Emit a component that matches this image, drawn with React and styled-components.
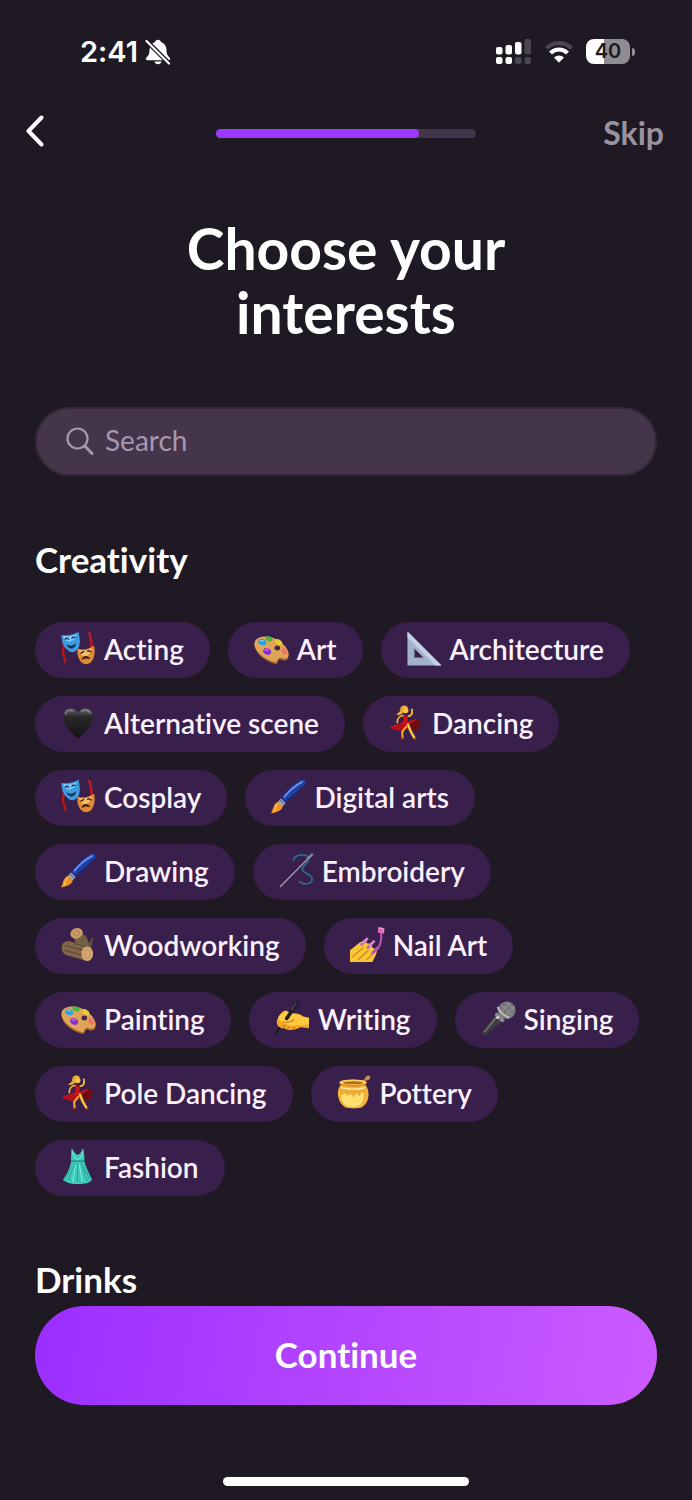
import React, { useState } from "react";
import styled, { createGlobalStyle } from "styled-components";

const creativity = [
  { name: "Acting", icon: Masks },
  { name: "Art", icon: Palette },
  { name: "Architecture", icon: SetSquare },
  { name: "Alternative scene", icon: BlackHeart },
  { name: "Dancing", icon: Dancer },
  { name: "Cosplay", icon: Masks },
  { name: "Digital arts", icon: Brush },
  { name: "Drawing", icon: Brush },
  { name: "Embroidery", icon: Needle },
  { name: "Woodworking", icon: Wood },
  { name: "Nail Art", icon: Nails },
  { name: "Painting", icon: Palette },
  { name: "Writing", icon: WritingHand },
  { name: "Singing", icon: Microphone },
  { name: "Pole Dancing", icon: Dancer },
  { name: "Pottery", icon: HoneyPot },
  { name: "Fashion", icon: Dress },
];

function App() {
  const [search, setSearch] = useState("");
  const [selected, setSelected] = useState([]);
  const progress = 78;

  const toggle = (name) => {
    setSelected(selected.includes(name) ? selected.filter((n) => n !== name) : [...selected, name]);
  };

  const visible = creativity.filter((item) => item.name.toLowerCase().includes(search.toLowerCase()));

  return (
    <Page>
      <GlobalStyle />
      <StatusBar>
        <StatusGroup>
          <Clock>2:41</Clock>
          <BellOff />
        </StatusGroup>
        <StatusIcons>
          <Signal />
          <Wifi />
          <Battery>
            <BatteryBody>40</BatteryBody>
            <BatteryCap />
          </Battery>
        </StatusIcons>
      </StatusBar>
      <NavBar>
        <BackBtn aria-label="Back">
          <svg width="20" height="36" viewBox="0 0 20 36" fill="none" stroke="#fff" strokeWidth="4" strokeLinecap="round" strokeLinejoin="round">
            <path d="M15.500 2.500 2.500 16 15.500 29.500" />
          </svg>
        </BackBtn>
        <Track role="progressbar" aria-label="Progress" aria-valuenow={progress}>
          <Fill style={{ width: `${progress}%` }} />
        </Track>
        <SkipBtn>Skip</SkipBtn>
      </NavBar>
      <Content>
        <Title>Choose your interests</Title>
        <SearchBox>
          <svg width="28" height="28" viewBox="0 0 28 28" fill="none" stroke="#a697b0" strokeLinecap="round">
            <circle cx="11.500" cy="11.500" r="10" strokeWidth="2.200" />
            <path d="M19 19.200 26 26.500" strokeWidth="3" />
          </svg>
          <SearchInput
            type="text"
            aria-label="Search"
            placeholder="Search"
            value={search}
            onChange={(e) => setSearch(e.target.value)}
          />
        </SearchBox>
        <Section>
          <SectionTitle>Creativity</SectionTitle>
          <ChipList>
            {visible.map(({ name, icon: Icon }) => (
              <Chip key={name} aria-pressed={selected.includes(name)} $active={selected.includes(name)} onClick={() => toggle(name)}>
                <Icon />
                {name}
              </Chip>
            ))}
          </ChipList>
        </Section>
        <Section>
          <SectionTitle>Drinks</SectionTitle>
        </Section>
      </Content>
      <Footer>
        <ContinueBtn>Continue</ContinueBtn>
        <HomeIndicator />
      </Footer>
    </Page>
  );
}

export default App;

function BellOff() {
  return (
    <svg width="26" height="26" viewBox="0 0 26 26">
      <path
        fill="#fff"
        d="M13 .8c-1.700 0-2.800 1-3 2.300C6.300 4.500 4.500 7.500 4.500 11c0 4-1 5.600-2.800 7.200-1.500 1.400-.9 3 .9 3h20.800c1.800 0 2.400-1.600.9-3C22.500 16.600 21.500 15 21.500 11c0-3.500-1.800-6.500-5.500-7.900-.2-1.300-1.300-2.300-3-2.300zM9.500 22.400h7c-.4 1.700-1.700 2.800-3.500 2.800s-3.100-1.100-3.500-2.800z"
      />
      <path d="M2 2.300 24 24.300" stroke="#1e1923" strokeWidth="4.600" />
      <path d="M1.500 2 24 24.500" stroke="#fff" strokeWidth="2.200" strokeLinecap="round" />
    </svg>
  );
}

function Signal() {
  return (
    <svg width="36" height="26" viewBox="0 0 36 26">
      <g fill="#fff">
        <rect x="0" y="8" width="6.500" height="7.500" rx="2" />
        <rect x="9.500" y="6" width="6.500" height="9.500" rx="2" />
        <rect x="19" y="3" width="6.500" height="12.500" rx="2" />
        <rect x="0" y="18" width="6.500" height="7" rx="2" />
        <rect x="9.500" y="18" width="6.500" height="7" rx="2" />
      </g>
      <g fill="#4a464f">
        <rect x="28.500" y="0" width="6.500" height="15.500" rx="2" />
        <rect x="19" y="18" width="6.500" height="7" rx="2" />
        <rect x="28.500" y="18" width="6.500" height="7" rx="2" />
      </g>
    </svg>
  );
}

function Wifi() {
  return (
    <svg width="30" height="24" viewBox="0 0 30 24" fill="none">
      <path d="M2.500 8.200C9.500 1.500 20.500 1.500 27.500 8.200" stroke="#4a464f" strokeWidth="4.300" />
      <path d="M6.500 13.100C11.500 8.300 18.500 8.300 23.500 13.100" stroke="#fff" strokeWidth="4.200" />
      <path d="M10 17.500c3-2.800 7-2.800 10 0L15.700 22.100q-.7.600-1.400 0z" fill="#fff" />
    </svg>
  );
}

function Masks() {
  return (
    <EmojiSvg viewBox="0 0 36 36">
      <path d="M2 11c3 5-1 8 0 12 1 3 3 5 2 10" stroke="#b3161c" strokeWidth="2.600" fill="none" />
      <path d="M28 1c4 3 1 6 3 9 1 3 0 5 0 7" stroke="#c1191d" strokeWidth="2.600" fill="none" />
      <path d="M.5 4C6 5 13 4 18 .8c1.500 7 2.500 14-1 18-3 4-8 4-11 0C2 15 .5 10 .5 4z" fill="#3d9be0" />
      <path d="M2 5c5 1 10 0 14-2 0 4-3 7-7 8-4 0-6-2-7-6z" fill="#7cc8f7" />
      <path d="M4 9c1-2 3-2 4 0M11 8c1-2 3-2 4-1" stroke="#153763" strokeWidth="1.400" fill="none" />
      <path d="M5.500 14c4 2 7 1 10-1.500C15 19 8 20 5.500 14z" fill="#12345f" />
      <path d="M17 18c6 2 11 1 17-3 1.500 7 .5 13-3 17-3 3-8 3-11-1-3-4-3.500-8-3-13z" fill="#dc8a35" />
      <path d="M18.500 19.500c5 1 9 0 13-2 0 5-3 8-7 9-3-1-5-3-6-7z" fill="#f7bf68" />
      <path d="M20 23c2-1 3-2 4-2M27 21c1-1 3-1 4 1" stroke="#482109" strokeWidth="1.400" fill="none" />
      <path d="M21 30c1-5 7-6 9-1-3-1-6-1-9 1z" fill="#481b0b" />
    </EmojiSvg>
  );
}

function Palette() {
  return (
    <EmojiSvg viewBox="0 0 36 36">
      <path d="M.5 14C.5 8 8 5 16 7c9 2 18 10 19.500 17 .5 5-2 7-6 6-3-1-3.500-1-4.500.5s-.5 4-3 3.500C11 31 .5 23 .5 14z" fill="#a9682a" />
      <path d="M.5 12.500C1 7 8 4.500 16 6c9 2 18 9.500 19.500 16.500 .5 5-2 6.500-6 5.500-3-1-4-.5-5 1s-1 3.500-3 3C11 29 0 21 .5 12.500z" fill="#dfa359" />
      <ellipse cx="24" cy="17.500" rx="2.900" ry="2.500" fill="#4a2447" />
      <ellipse cx="8.500" cy="11.500" rx="4.200" ry="3.200" fill="#29a2dc" transform="rotate(20 8.500 11.500)" />
      <ellipse cx="15.500" cy="8" rx="3.700" ry="2.400" fill="#43b83e" transform="rotate(20 15.500 8)" />
      <ellipse cx="25.500" cy="11.500" rx="4" ry="2.500" fill="#e8cc35" transform="rotate(35 25.500 11.500)" />
      <ellipse cx="31" cy="21" rx="3.500" ry="2.500" fill="#ed745e" transform="rotate(55 31 21)" />
      <ellipse cx="13.500" cy="21" rx="4.200" ry="3.200" fill="#8a2ad1" transform="rotate(25 13.500 21)" />
      <path d="M6 10.500c1-1 3-1 4 0M11 20c1-1 3-1 4 0" stroke="#ffffff99" strokeWidth="1" fill="none" />
    </EmojiSvg>
  );
}

function SetSquare() {
  return (
    <EmojiSvg viewBox="0 0 36 36">
      <path d="M.5.5 35.500 35.500H.5zM7.500 18v9.500h9.500z" fill="#a3b2ca" fillRule="evenodd" />
      <path d="M.5.5 35.500 35.500h-6L.5 6.500z" fill="#c3d2e6" />
      <path d="M7.500 18v9.500h9.500" stroke="#71809a" fill="none" />
    </EmojiSvg>
  );
}

function BlackHeart() {
  return (
    <EmojiSvg viewBox="0 0 36 36">
      <defs>
        <linearGradient id="heart" x1="0" y1="0" x2="0" y2="1">
          <stop offset="0" stopColor="#6a696c" />
          <stop offset=".28" stopColor="#29272a" />
          <stop offset="1" stopColor="#141315" />
        </linearGradient>
      </defs>
      <path d="M17.500 34.500C8 26 2 20.500 2 12c0-5 3.500-8.500 8-8.500 3.500 0 6 1.800 7.500 4.800C19 5.300 21.500 3.500 25 3.500c4.500 0 8 3.500 8 8.500 0 8.500-6 14-15.500 22.500z" fill="url(#heart)" />
      <path d="M4.500 9c1-3 4-4 7-3M21 7c3-2.500 7-2 9 1" stroke="#a3a2a5" strokeWidth="1.500" fill="none" strokeLinecap="round" opacity=".6" />
    </EmojiSvg>
  );
}

function Dancer() {
  return (
    <EmojiSvg viewBox="0 0 36 36" fill="none">
      {/* back of the skirt */}
      <path d="M18 17c5 0 8-4 13-2 3 2 2 7-3 12-4-1-7-2-10-5z" fill="#6b0d12" />
      <path d="M18 18c4-1 8-5 12-3-3 0-6 4-11 5z" fill="#c4161f" />
      <path d="M14.500 11C11 11 8.500 14 8.500 18" stroke="#eeb236" strokeWidth="1.900" strokeLinecap="round" />
      <path d="M20 11.500c3 0 4.500-3 3.500-7" stroke="#f5bd35" strokeWidth="1.900" strokeLinecap="round" />
      <path d="m15 11 4.500.5-.5 6.500 2 5c-2 2-4 2-7 3-4 1-9 0-13-3 2-2 5-2 8-3 3-1 5-2 6-4z" fill="#c8121c" />
      <path d="M3 24c4 0 9-2 11-4M8 25.500c4-1 7-2 8-5" stroke="#8b0d16" strokeWidth="1" />
      <path d="M17.500 22.500 13.500 28l.5 5.500" stroke="#e9aa2c" strokeWidth="2.200" strokeLinecap="round" strokeLinejoin="round" />
      <path d="m19.500 20 3 7.500 3.500 6" stroke="#f7c442" strokeWidth="2.600" strokeLinecap="round" strokeLinejoin="round" />
      <path d="m12 34.500 3 .5M25.500 35h2.500" stroke="#ad151d" strokeWidth="1.300" strokeLinecap="round" />
      <circle cx="17" cy="5.500" r="3" fill="#f8c645" />
      <path d="M19.500 2.500C17-1 11.500.5 11.500 4.500c0 3-2 3-4 5.500 3 1 6.500 0 7.500-3.500.5-2 2-3.500 4.500-4z" fill="#eab43c" />
      <path d="M13.500 2.500c-1 3-1 4-3 6" stroke="#c98a22" strokeWidth=".8" />
    </EmojiSvg>
  );
}

function Brush() {
  return (
    <EmojiSvg viewBox="0 0 36 36">
      <path d="M10 21C14 14 23 5.500 30.500 1.300c4-1.500 6 .2 4.700 3.700C32 11 22 19.500 14 25z" fill="#2440a8" />
      <path d="M14 18C19 12 26 6 32 3" stroke="#6c97f2" strokeWidth="1.800" fill="none" strokeLinecap="round" />
      <path d="M15 23C21 18.500 29 12 33 7" stroke="#142665" strokeWidth="1.300" fill="none" />
      <path d="m10 20 5 5-3.500 3.500-4.500-4.500z" fill="#9daab5" />
      <path d="m9 21.500 4.500 4.500" stroke="#4f5961" strokeWidth="1" />
      <path d="M7 23.500 12 28.500C10.500 33.500 4 34.500 0 35.500 2.500 31 2 26 7 23.500z" fill="#ed9225" />
      <path d="M7 25.500c-3 2.500-2 5-4 8" stroke="#ffc057" strokeWidth="1.500" fill="none" />
    </EmojiSvg>
  );
}

function Needle() {
  return (
    <EmojiSvg viewBox="0 0 36 36" fill="none">
      <path d="M15 8C15 2 26 0 30 4c3 5-5 8-6 12-1 5 9 5 10 10 1 7-10 7-13 3" stroke="#2c6c8e" strokeWidth="1.800" />
      <path d="M1.500 34.500 33 2.500" stroke="#a294a9" strokeWidth="1.500" strokeLinecap="round" />
      <path d="M29 6.500 34 1.500" stroke="#6c6d7d" strokeWidth="3" strokeLinecap="round" />
      <path d="m29.500 6 3.500-3.500" stroke="#c0c4cc" strokeWidth="1" />
    </EmojiSvg>
  );
}

function Wood() {
  return (
    <EmojiSvg viewBox="0 0 36 36">
      <path d="m18 8 8 1 3 8 3-7 1 1-2 12-8 4z" fill="#65503c" />
      <path d="m12 7 9-3 8 13-3 10-10-7z" fill="#756047" />
      <ellipse cx="16" cy="6.500" rx="6.500" ry="5.300" fill="#c99b67" transform="rotate(-22 16 6.500)" />
      <ellipse cx="16" cy="6.500" rx="3" ry="2.300" fill="none" stroke="#b3854f" transform="rotate(-22 16 6.500)" />
      <path d="M1 19c1-4 5-5 9-4l18 5c5 2 4 15-1 15L6 29C1 27 0 23 1 19z" fill="#806548" />
      <path d="m4 19 18 4.500M4 24l17 4.500M13 17l12 3" stroke="#5e4934" strokeWidth="1.200" />
      <ellipse cx="27" cy="27.500" rx="6" ry="7.500" fill="#d2a675" />
      <ellipse cx="27" cy="27.500" rx="3" ry="4.200" fill="none" stroke="#bd8f5d" />
    </EmojiSvg>
  );
}

function Nails() {
  return (
    <EmojiSvg viewBox="0 0 36 36">
      <path d="M0 24 10 16l5-2 3 3 4 0 1 4 5 3c-1 5-3 8-5 12H0z" fill="#f8c636" />
      <path d="m2 31 12-10M8 34l11-10M17 34l8-8" stroke="#cf8a1e" strokeWidth="1.300" />
      <path d="m12 18 5.500-5.500M18.500 21l6-6M23 27l5-5" stroke="#c76abf" strokeWidth="3" strokeLinecap="round" />
      <path d="m13 16 4-4M20 19l4-4" stroke="#eba6e3" strokeWidth="1.200" strokeLinecap="round" />
      <path d="M32 6c1 10-1 16-8 20" stroke="#b94fb2" strokeWidth="2.200" fill="none" strokeLinecap="round" />
      <path d="m29 0 6.500 1-.5 6-6.500-1z" fill="#db68b8" />
      <path d="m30 1 4 1v3" stroke="#f4a2d7" fill="none" />
    </EmojiSvg>
  );
}

function WritingHand() {
  return (
    <EmojiSvg viewBox="0 0 36 36">
      <path d="M2 20C4 14 9 9 12 10l4 3c5-1 10 0 13 3l6 1v11l-9-1c-5 3-12 4-17 1-4 1-8-3-7-8z" fill="#f2a824" />
      <path d="M3 18c2-5 7-9 10-7 5 3 11 2 15 5l7 2v6c-5 1-9 1-14 1-8 1-12-1-18-7z" fill="#ffca40" />
      <path d="M8 21c4 2 8 1 12-2M8 27l3-3M13 29l2-3M18 29l2-2" stroke="#cd7a1c" strokeWidth="1.100" fill="none" />
      <path d="M23.500 1.500 12 18" stroke="#1e1c25" strokeWidth="3.600" strokeLinecap="round" />
      <path d="M4.500 28 1 33.500" stroke="#1e1c25" strokeWidth="2.600" strokeLinecap="round" />
      <path d="m22 2-5 7" stroke="#66636f" strokeWidth="1" />
    </EmojiSvg>
  );
}

function Microphone() {
  return (
    <EmojiSvg viewBox="0 0 36 36">
      <path d="M16 13 23 20 6 34q-4 2-5.500-1.500z" fill="#3d3d40" />
      <path d="m16.500 16-13 16" stroke="#77787c" strokeWidth="1.500" />
      <circle cx="26.500" cy="9.500" r="9" fill="#77787b" />
      <path d="m18 8 10 10M21 4l11 11M26 1l8 8M19 13 30 2M23 17 35 5" stroke="#9c9c9f" strokeWidth=".8" />
      <path d="M17 6c2 5 6 9 12 11" stroke="#b9b9bc" strokeWidth="2" fill="none" />
      <path d="M15.500 11.500c4 2 7 5 9 9l-3 1.500-7.500-7.500z" fill="#8b8b8f" />
      <path d="m16 18 2-2" stroke="#e6e6e8" strokeWidth="2" />
    </EmojiSvg>
  );
}

function HoneyPot() {
  return (
    <EmojiSvg viewBox="0 0 36 36">
      <path d="m24 9 7-6" stroke="#b87829" strokeWidth="2" />
      <ellipse cx="31.500" cy="3" rx="2.800" ry="2.200" fill="#c98e48" transform="rotate(-35 31.500 3)" />
      <path d="M4 10h25c5 5 5 18-3 23-4 2-14 2-18 0C0 28-1 15 4 10z" fill="#f2b53a" />
      <path d="M5 18c-2 7 2 13 6 14 4 1 9 1 12-1 4-3 5-8 4-13-8 3-15 3-22 0z" fill="#ffe070" />
      <ellipse cx="16.500" cy="8.500" rx="14" ry="3.500" fill="#d98e28" />
      <ellipse cx="16.500" cy="7.500" rx="14" ry="2.800" fill="#ffd15a" />
      <ellipse cx="16.500" cy="8" rx="10.500" ry="1.600" fill="#b5691a" />
      <path d="M3 13c5 2 21 2 27 0v4c-1 3-3 2-3-1-2-1-3 1-3 5-1 2-2 1-2-3-2-1-3 0-4 4-1 2-2 1-2-3-2-1-3-1-4 1-1 2-2 1-3-1-2-1-2 0-3 1-2 1-3-1-3-3z" fill="#edaa35" />
      <path d="M4 13c6 2 20 2 25 0" stroke="#fff0a1" strokeWidth="1.200" fill="none" />
    </EmojiSvg>
  );
}

function Dress() {
  return (
    <EmojiSvg viewBox="0 0 36 36">
      <path d="M12 0c1 3 3 5 5 6 3-1 4-3 5-6l1.500.500c-.5 4 1 5 .5 12 2 7 5 13 8 19-3 4-8 4-14 4.500-7 0-12-1-16-4.500 5-7 7-12 8.500-19-.5-6 .5-8 0-12z" fill="#3fc9b8" />
      <path d="M10.500 12.500h13.500" stroke="#258d86" strokeWidth="1.500" />
      <path d="M14 15 7 33M17 15v19M21 15l6 18M11 18 4 31M23 18l7 13" stroke="#239a91" strokeWidth=".8" />
      <path d="m15 16-3 18M19 16l3 18" stroke="#84eddd" strokeWidth="1" />
      <path d="M12 3c0 4 2 7 5 8 3-1 5-4 5-8" stroke="#82e7d9" fill="none" />
    </EmojiSvg>
  );
}

const GlobalStyle = createGlobalStyle`
  * {
    box-sizing: border-box;
  }

  body {
    margin: 0;
    background-color: #1e1923;
    color: white;
    font-family: "Lato", sans-serif;
    font-variant-ligatures: none;
  }

  button, input {
    font-family: inherit;
    font-variant-ligatures: inherit;
  }

  button {
    padding: 0;
    border: none;
    background: none;
    color: inherit;
    cursor: pointer;
  }

  svg {
    display: block;
    flex-shrink: 0;
  }
`;

const Page = styled.div`
  display: flex;
  flex-direction: column;
  min-height: 100vh;
`;

const StatusBar = styled.div`
  display: flex;
  justify-content: space-between;
  align-items: center;
  height: 103px;
  padding: 0 57px 0 80px;
  font-family: "Inter", sans-serif;
`;

const StatusGroup = styled.div`
  display: flex;
  align-items: center;
  gap: 7px;
`;

const StatusIcons = styled(StatusGroup)`
  gap: 12px;
`;

const Clock = styled.span`
  font-size: 29px;
  font-weight: 600;
`;

const Battery = styled.div`
  display: flex;
  align-items: center;
  gap: 2px;
`;

const BatteryBody = styled.div`
  width: 44px;
  border-radius: 8px;
  background: linear-gradient(to right, #fff 40%, #8f8c92 40%);
  color: #1e1923;
  font-size: 20px;
  font-weight: 600;
  line-height: 25px;
  text-align: center;
`;

const BatteryCap = styled.div`
  width: 3px;
  height: 8px;
  border-radius: 0 4px 4px 0;
  background-color: #8f8c92;
`;

const NavBar = styled.header`
  display: grid;
  grid-template-columns: 1fr 260px 1fr;
  align-items: center;
  height: 60px;
  padding: 0 26px;
`;

const BackBtn = styled.button`
  justify-self: start;
`;

const Track = styled.div`
  height: 9px;
  border-radius: 5px;
  background-color: #40354a;
`;

const Fill = styled.div`
  height: 100%;
  border-radius: 5px;
  background-color: #9d38ff;
`;

const SkipBtn = styled.button`
  justify-self: end;
  padding: 0 2px 2px;
  color: #9a92a0;
  font-size: 32px;
  font-weight: 700;
`;

const Content = styled.main`
  flex: 1;
  padding: 53px 35px 0;
`;

const Title = styled.h1`
  max-width: 400px;
  margin: 0 auto 63px;
  font-size: 57px;
  font-weight: 700;
  line-height: 64px;
  text-align: center;
`;

const SearchBox = styled.label`
  display: flex;
  align-items: center;
  gap: 11px;
  height: 69px;
  padding: 0 29px 2px;
  border: 2px solid #33293a;
  border-radius: 35px;
  background-color: #44354b;
`;

const SearchInput = styled.input`
  flex: 1;
  min-width: 0;
  padding: 0 0 2px;
  border: none;
  outline: none;
  background: none;
  color: white;
  font-size: 28px;

  &::placeholder {
    color: #a697b0;
  }
`;

const Section = styled.section`
  margin-top: 63px;
`;

const SectionTitle = styled.h2`
  margin: 0;
  font-size: 35px;
  font-weight: 700;
  line-height: 40px;
`;

const ChipList = styled.div`
  display: flex;
  flex-wrap: wrap;
  gap: 18px;
  margin-top: 43px;
`;

const Chip = styled.button`
  display: flex;
  align-items: center;
  gap: 8px;
  height: 56px;
  padding: 0 26px 3px;
  border-radius: 28px;
  background-color: ${(props) => (props.$active ? "#9d38ff" : "#391f4b")};
  color: #fbf0fe;
  font-size: 28px;
  font-weight: 600;
`;

const EmojiSvg = styled.svg.attrs({ "aria-hidden": true })`
  width: 35px;
  height: 35px;
`;

const Footer = styled.footer`
  display: flex;
  flex-direction: column;
  align-items: center;
  gap: 72px;
  padding: 0 35px 14px;
`;

const ContinueBtn = styled.button`
  width: 100%;
  height: 99px;
  padding-bottom: 4px;
  border-radius: 50px;
  background: linear-gradient(100deg, #9b2eff, #cc5cff);
  font-size: 35px;
  font-weight: 700;
`;

const HomeIndicator = styled.div`
  width: 246px;
  height: 9px;
  border-radius: 5px;
  background-color: white;
`;
